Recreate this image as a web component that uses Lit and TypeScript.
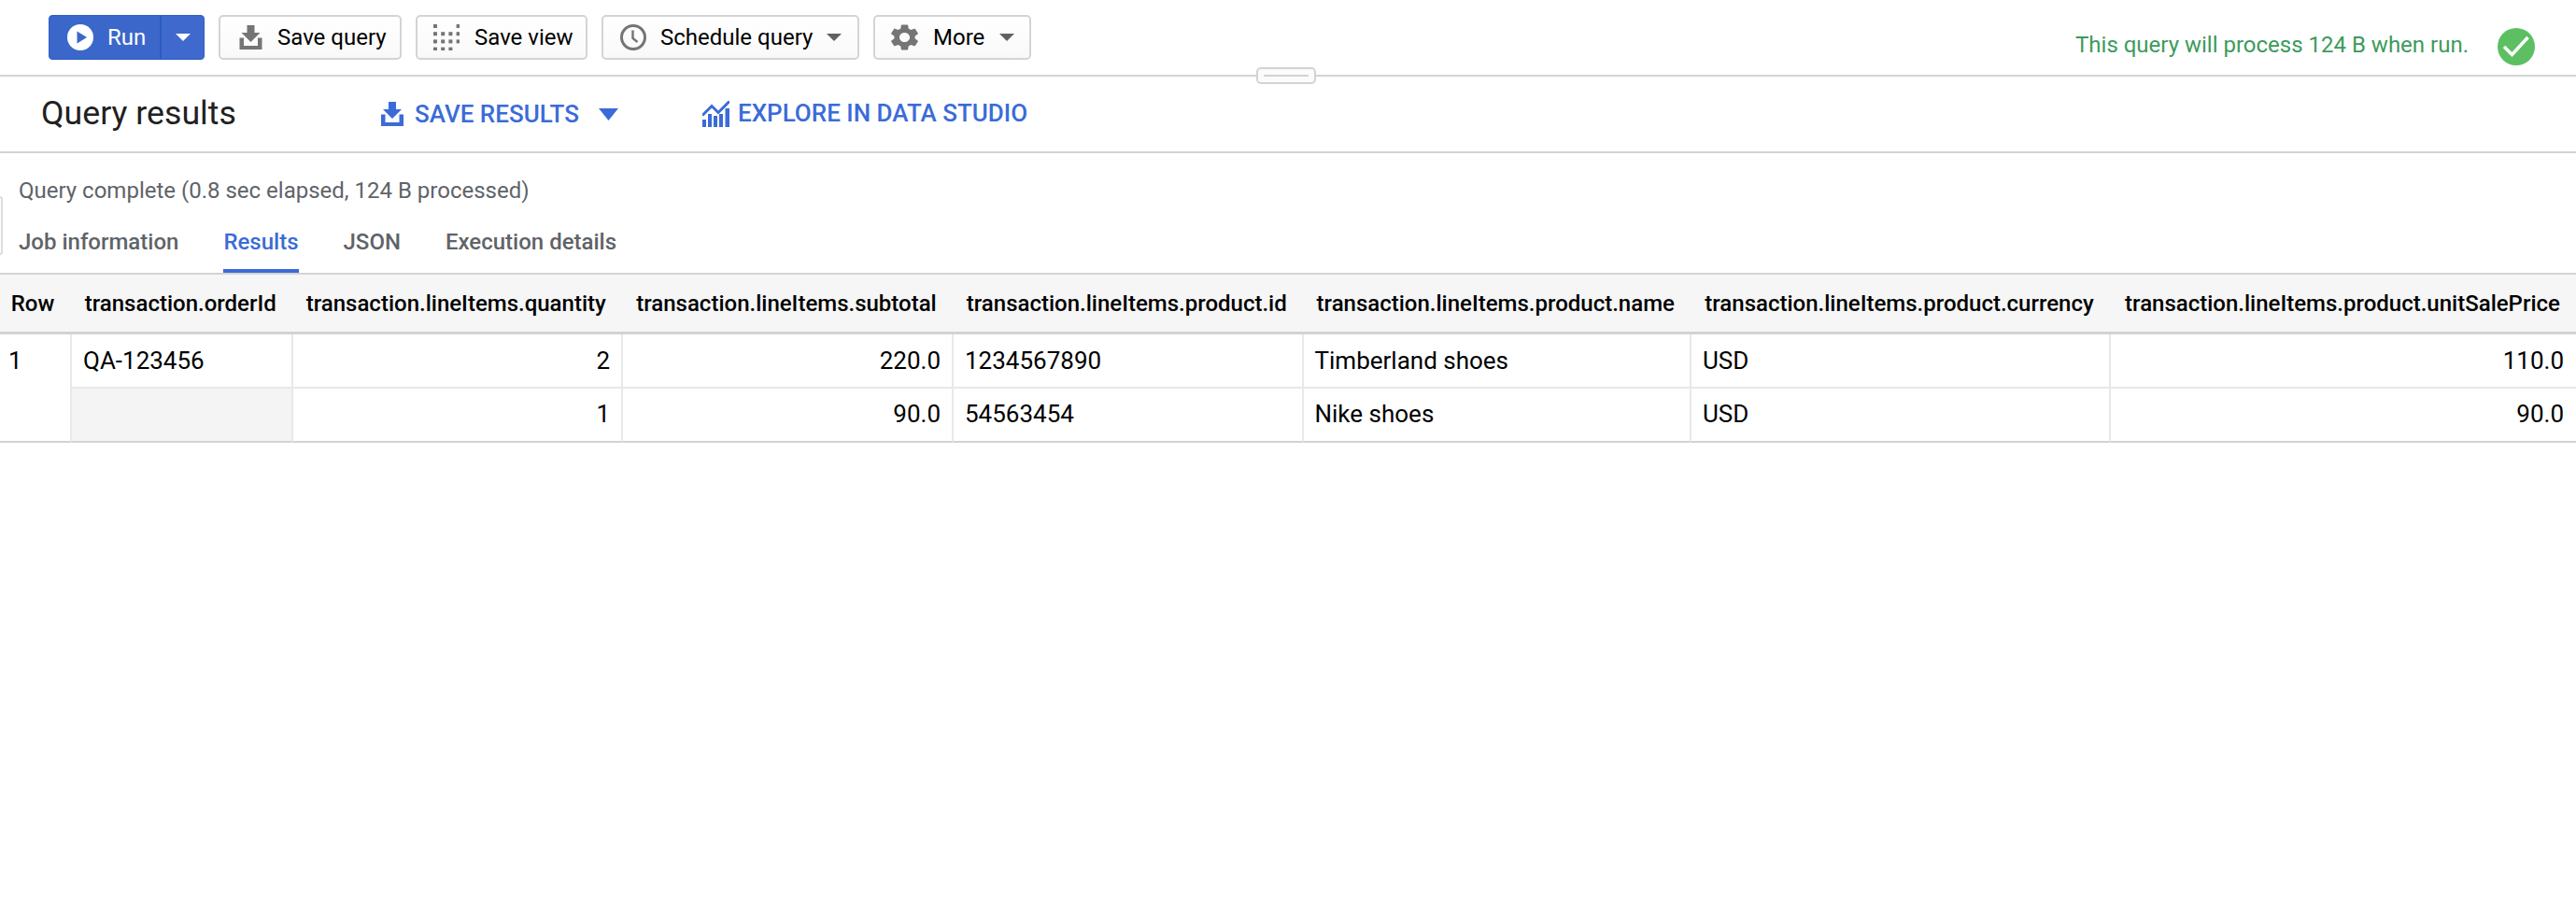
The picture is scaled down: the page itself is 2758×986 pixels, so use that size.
import { LitElement, html, css, svg } from "lit";
import { customElement } from "lit/decorators.js";

const GEAR = "M19.14 12.94c.04-.3.06-.61.06-.94 0-.32-.02-.64-.07-.94l2.03-1.58c.18-.14.23-.41.12-.61l-1.92-3.32c-.12-.22-.37-.29-.59-.22l-2.39.96c-.5-.38-1.03-.7-1.62-.94l-.36-2.54c-.04-.24-.24-.41-.48-.41h-3.84c-.24 0-.43.17-.47.41l-.36 2.54c-.59.24-1.13.57-1.62.94l-2.39-.96c-.22-.08-.47 0-.59.22L2.74 8.87c-.12.21-.08.47.12.61l2.03 1.58c-.05.3-.09.63-.09.94s.02.64.07.94l-2.03 1.58c-.18.14-.23.41-.12.61l1.92 3.32c.12.22.37.29.59.22l2.39-.96c.5.38 1.03.7 1.62.94l.36 2.54c.05.24.24.41.48.41h3.84c.24 0 .44-.17.47-.41l.36-2.54c.59-.24 1.13-.56 1.62-.94l2.39.96c.22.08.47 0 .59-.22l1.92-3.32c.12-.22.07-.47-.12-.61l-2.01-1.58zM12 15.6c-1.98 0-3.6-1.62-3.6-3.6s1.62-3.6 3.6-3.6 3.6 1.62 3.6 3.6-1.62 3.6-3.6 3.6z";

const viewDots = [
  [0, 0], [3, 0],
  [0, 1], [1, 1], [2, 1], [3, 1],
  [0, 2], [1, 2], [2, 2], [3, 2],
  [0, 3], [1, 3], [2, 3],
];

const headers = [
  "Row",
  "transaction.orderId",
  "transaction.lineItems.quantity",
  "transaction.lineItems.subtotal",
  "transaction.lineItems.product.id",
  "transaction.lineItems.product.name",
  "transaction.lineItems.product.currency",
  "transaction.lineItems.product.unitSalePrice",
];

const rows = [
  { orderId: "QA-123456", qty: "2", sub: "220.0", id: "1234567890", name: "Timberland shoes", cur: "USD", price: "110.0" },
  { orderId: "", qty: "1", sub: "90.0", id: "54563454", name: "Nike shoes", cur: "USD", price: "90.0" },
];

@customElement("app-root")
export class AppRoot extends LitElement {
  static styles = css`
    :host {
      display: block;
      width: 2758px;
      height: 986px;
      background: #fff;
      overflow: hidden;
      position: relative;
      font-family: Roboto, "Liberation Sans", sans-serif;
      font-size: 24px;
      color: #000;
    }
    .toolbar {
      box-sizing: border-box;
      height: 82px;
      border-bottom: 2px solid #d3d3d3;
      padding: 16px 44px 0 52px;
      display: flex;
      align-items: flex-start;
      gap: 15px;
      position: relative;
    }
    .run {
      box-sizing: border-box;
      width: 167px;
      height: 48px;
      background: #3b67cb;
      border-radius: 4px;
      color: #fff;
      display: flex;
      border: 1px solid #2f5fc6;
    }
    .run-main {
      width: 120px;
      display: flex;
      align-items: center;
      gap: 15px;
      padding-left: 19px;
      box-sizing: border-box;
      border-right: 2px solid #2a5cc3;
    }
    .run-arrow {
      flex: 1;
      display: flex;
      align-items: center;
      justify-content: center;
      background: #3f69cc;
    }
    .btn {
      box-sizing: border-box;
      height: 48px;
      border: 2px solid #d4d4d4;
      border-radius: 5px;
      background: linear-gradient(#ffffff, #f9f9f9);
      display: flex;
      align-items: center;
      padding-left: 20px;
      color: #000;
      white-space: nowrap;
    }
    .btn svg { color: #757575; flex: none; }
    .b-query { width: 196px; gap: 16px; }
    .b-view { width: 184px; gap: 16px; padding-left: 17px; }
    .b-sched { width: 276px; gap: 15px; padding-left: 18px; }
    .b-more { width: 169px; gap: 16px; padding-left: 17px; }
    .status {
      margin-left: auto;
      display: flex;
      align-items: center;
      gap: 31px;
      height: 40px;
      margin-top: 14px;
      color: #3d9a5b;
    }
    .status span { position: relative; top: -2px; }
    .handle {
      position: absolute;
      left: 1345px;
      top: 72px;
      width: 64px;
      height: 18px;
      box-sizing: border-box;
      border: 2px solid #d3d3d3;
      border-radius: 5px;
      background: #fbfbfb;
      display: flex;
      align-items: center;
      justify-content: center;
    }
    .handle i {
      display: block;
      width: 48px;
      height: 2px;
      background: #d3d3d3;
    }
    .results-bar {
      box-sizing: border-box;
      height: 82px;
      border-bottom: 2px solid #d3d3d3;
      display: flex;
      align-items: center;
      padding-left: 44px;
      color: #3b6bd8;
      font-weight: 500;
      font-size: 26px;
    }
    .title {
      width: 364px;
      font-size: 35.7px;
      font-weight: 400;
      color: #212121;
      position: relative;
      top: -1px;
    }
    .action { display: flex; align-items: center; }
    .act-save { gap: 12px; }
    .act-save .tri { margin-left: 9px; }
    .act-explore { gap: 9px; margin-left: 90px; }
    .act-explore span { position: relative; top: -1px; }
    .msg {
      box-sizing: border-box;
      height: 78px;
      padding: 1px 0 0 20px;
      display: flex;
      align-items: center;
      color: #5f6368;
      position: relative;
    }
    .stub {
      position: absolute;
      left: -4px;
      top: 46px;
      width: 7px;
      height: 63px;
      box-sizing: border-box;
      border: 2px solid #dcdcdc;
      border-radius: 4px;
      background: #fff;
    }
    .tabs {
      display: flex;
      gap: 48px;
      padding-left: 20px;
      height: 50px;
    }
    .tab {
      box-sizing: border-box;
      height: 50px;
      line-height: 35px;
      font-weight: 500;
      color: #5f6368;
    }
    .tab.active {
      color: #3b6bd8;
      border-bottom: 4px solid #3b6bd8;
    }
    .table {
      display: grid;
      grid-template-columns: 75px 236.5px 353.5px 354px 374.5px 415.5px 449px 500px;
      grid-template-rows: 64px 58px 58px;
      border-top: 2px solid #d3d3d3;
      line-height: 56px;
      font-size: 26px;
    }
    .th {
      background: #f6f6f6;
      border-bottom: 3px solid #d3d3d3;
      font-weight: 500;
      font-size: 24px;
      text-align: center;
      line-height: 63px;
      white-space: nowrap;
      overflow: hidden;
    }
    .th.row { padding-right: 5px; }
    .td {
      box-sizing: border-box;
      border-left: 2px solid #e8e8e8;
      border-bottom: 2px solid #e8e8e8;
      padding: 0 12px 0 12px;
      white-space: nowrap;
    }
    .td.last { border-bottom-color: #d3d3d3; line-height: 54px; }
    .td.rownum {
      grid-row: span 2;
      border-left: none;
      border-bottom: 2px solid #d3d3d3;
      padding-left: 9px;
    }
    .td.num { text-align: right; }
    .td.end { padding-right: 13px; }
    .td.empty { background: #f4f4f4; }
  `;

  private caret() {
    return html`<svg width="16" height="8" viewBox="0 0 16 8"><path d="M0 0h16L8 8z" fill="#616161"/></svg>`;
  }

  private saveIcon(w: number, h: number) {
    return html`<svg width=${w} height=${h} viewBox="0 0 24 26" fill="currentColor"><path d="M8 0h8v8h6l-10 10L2 8h6z"/><path d="M0 13.500h4.500v8.500h15v-8.500H24V26H0z"/></svg>`;
  }

  render() {
    return html`
      <div class="toolbar">
        <div class="run">
          <div class="run-main">
            <svg width="28" height="28" viewBox="0 0 28 28">
              <circle cx="14" cy="14" r="14" fill="#fff"/>
              <path d="M10.500 7.500 21 14 10.500 20.500z" fill="#3b67cb"/>
            </svg>
            <span>Run</span>
          </div>
          <div class="run-arrow">
            <svg width="16" height="8" viewBox="0 0 16 8"><path d="M0 0h16L8 8z" fill="#fff"/></svg>
          </div>
        </div>
        <div class="btn b-query">${this.saveIcon(25, 26)}<span>Save query</span></div>
        <div class="btn b-view">
          <svg width="28" height="28" viewBox="0 0 28 28" fill="currentColor">
            ${viewDots.map(([c, r]) => svg`<rect x=${c * 8.2} y=${r * 8.2} width="4" height="4"/>`)}
          </svg>
          <span>Save view</span>
        </div>
        <div class="btn b-sched">
          <svg width="28" height="28" viewBox="0 0 28 28" fill="none" stroke="currentColor">
            <circle cx="14" cy="14" r="12.500" stroke-width="3"/>
            <path d="M13.500 6.500v8.500l5 4" stroke-width="2.500"/>
          </svg>
          <span>Schedule query</span>
          ${this.caret()}
        </div>
        <div class="btn b-more">
          <svg width="29" height="28" viewBox="2.600 2 18.800 20" preserveAspectRatio="none" fill="currentColor"><path d=${GEAR}/></svg>
          <span>More</span>
          ${this.caret()}
        </div>
        <div class="status">
          <span>This query will process 124 B when run.</span>
          <svg width="40" height="40" viewBox="0 0 40 40">
            <circle cx="20" cy="20" r="20" fill="#5cc063"/>
            <path d="M7 20l8.500 8.500L32.500 10" fill="none" stroke="#fff" stroke-width="3.500"/>
          </svg>
        </div>
      </div>
      <div class="handle"><i></i></div>
      <div class="results-bar">
        <div class="title">Query results</div>
        <div class="action act-save">
          ${this.saveIcon(24, 26)}
          <span>SAVE RESULTS</span>
          <svg class="tri" width="21" height="13" viewBox="0 0 21 13"><path d="M0 0h21L10.500 13z" fill="currentColor"/></svg>
        </div>
        <div class="action act-explore">
          <svg width="29" height="28" viewBox="0 0 29 28" fill="currentColor">
            <path d="M0 15.500 10 5.500l7 7L29 0.500" fill="none" stroke="currentColor" stroke-width="3"/>
            <rect x="0" y="20" width="4" height="8"/>
            <rect x="6" y="14" width="4" height="14"/>
            <rect x="12" y="16" width="4" height="12"/>
            <rect x="18" y="14" width="4" height="14"/>
            <rect x="24.500" y="8" width="4.500" height="20"/>
          </svg>
          <span>EXPLORE IN DATA STUDIO</span>
        </div>
      </div>
      <div class="msg">
        <div class="stub"></div>
        Query complete (0.8 sec elapsed, 124 B processed)
      </div>
      <div class="tabs">
        <div class="tab">Job information</div>
        <div class="tab active">Results</div>
        <div class="tab">JSON</div>
        <div class="tab">Execution details</div>
      </div>
      <div class="table">
        ${headers.map((h, i) => html`<div class="th ${i === 0 ? "row" : ""}">${h}</div>`)}
        ${rows.map((r, i) => {
          const last = i === rows.length - 1 ? "last" : "";
          return html`
            ${i === 0 ? html`<div class="td rownum">1</div>` : ""}
            <div class="td ${last} ${r.orderId ? "" : "empty"}">${r.orderId}</div>
            <div class="td num ${last}">${r.qty}</div>
            <div class="td num ${last}">${r.sub}</div>
            <div class="td ${last}">${r.id}</div>
            <div class="td ${last}">${r.name}</div>
            <div class="td ${last}">${r.cur}</div>
            <div class="td num end ${last}">${r.price}</div>
          `;
        })}
      </div>
    `;
  }
}
